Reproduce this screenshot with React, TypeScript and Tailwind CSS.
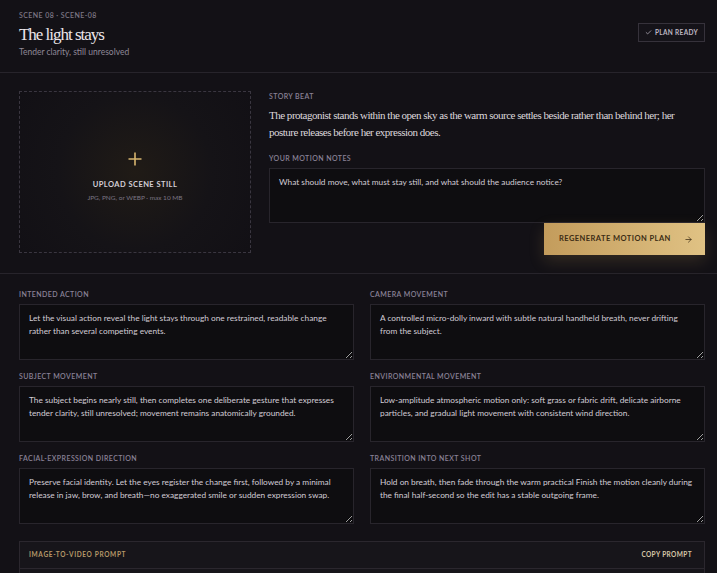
import { ArrowRight, Check } from 'lucide-react';

const sans = { fontFamily: 'Lato, "Open Sans", sans-serif' };
const serif = { fontFamily: '"Liberation Serif", "DejaVu Serif", serif' };

const fields = [
  {
    label: 'Intended action',
    value: 'Let the visual action reveal the light stays through one restrained, readable change rather than several competing events.',
  },
  {
    label: 'Camera movement',
    value: 'A controlled micro-dolly inward with subtle natural handheld breath, never drifting from the subject.',
  },
  {
    label: 'Subject movement',
    value: 'The subject begins nearly still, then completes one deliberate gesture that expresses tender clarity, still unresolved; movement remains anatomically grounded.',
  },
  {
    label: 'Environmental movement',
    value: 'Low-amplitude atmospheric motion only: soft grass or fabric drift, delicate airborne particles, and gradual light movement with consistent wind direction.',
  },
  {
    label: 'Facial-expression direction',
    value: 'Preserve facial identity. Let the eyes register the change first, followed by a minimal release in jaw, brow, and breath\u2014no exaggerated smile or sudden expression swap.',
  },
  {
    label: 'Transition into next shot',
    value: 'Hold on breath, then fade through the warm practical Finish the motion cleanly during the final half-second so the edit has a stable outgoing frame.',
  },
];

function Label({ children }: { children: React.ReactNode }) {
  return (
    <div className="text-[7px] leading-[8px] uppercase tracking-[0.06em] text-[#8a8296] font-semibold">{children}</div>
  );
}

export default function App() {
  return (
    <div className="min-h-screen w-full bg-[#131116] text-[#d9d4dc]" style={sans}>
      {/* header */}
      <header className="flex items-start justify-between h-[73px] border-b border-[#27242b] pl-[19px] pr-[12px] pt-[11px]">
        <div>
          <div className="text-[7px] leading-[8px] uppercase tracking-[0.06em] text-[#7d7785] font-semibold">
            Scene 08 · scene-08
          </div>
          <h1 className="mt-[6px] text-[17px] leading-[20px] tracking-[-0.06em] text-[#ece6ea]" style={serif}>
            The light stays
          </h1>
          <p className="mt-[1px] text-[8.5px] leading-[12px] text-[#8f8897]">Tender clarity, still unresolved</p>
        </div>
        <div className="mt-[12px] flex items-center gap-[3px] h-[19px] px-[6px] border border-[#36323b] bg-[#151319] text-[6.5px] uppercase tracking-[0.05em] text-[#bdb6c2] font-bold">
          <Check size={7} strokeWidth={2.5} />
          Plan ready
        </div>
      </header>

      {/* top */}
      <section className="flex gap-[18px] pl-[19px] pr-[12px] pt-[18px] pb-[18px] border-b border-[#27242b]">
        <div className="w-[232px] h-[162px] shrink-0 pt-[10px] border border-dashed border-[#3a3640] bg-[radial-gradient(circle_at_50%_50%,#201b16_0%,#151317_55%,#121015_100%)] flex flex-col items-center justify-center">
          <svg width="14" height="14" viewBox="0 0 14 14">
            <path d="M7 0.5v13M0.5 7h13" stroke="#d8b56f" strokeWidth="1.6" fill="none" />
          </svg>
          <div className="mt-[14px] text-[7.5px] leading-[10px] font-bold uppercase tracking-[0.06em] text-[#d4cfd6]">
            Upload scene still
          </div>
          <div className="mt-[4px] text-[6.5px] leading-[8px] text-[#7b7583]">JPG, PNG, or WEBP · max 10 MB</div>
        </div>
        <div className="flex-1 min-w-0 pt-[1px]">
          <Label>Story beat</Label>
          <p className="mt-[7px] text-[11px] leading-[17px] tracking-[-0.045em] text-[#ddd7dc]" style={serif}>
            The protagonist stands within the open sky as the warm source settles beside rather than behind her; her
            posture releases before her expression does.
          </p>
          <div className="mt-[13px]">
            <Label>Your motion notes</Label>
          </div>
          <textarea
            className="mt-[6px] block w-full h-[55px] bg-[#0e0d10] border border-[#28252c] px-[9px] py-[7px] text-[8.3px] leading-[13px] text-[#d2ccd5] placeholder:text-[#d2ccd5] outline-none"
            placeholder="What should move, what must stay still, and what should the audience notice?"
            style={sans}
          />
          <div className="flex justify-end">
            <button className="flex items-center justify-between w-[161px] h-[32px] pl-[15px] pr-[12px] bg-[linear-gradient(90deg,#c39c5c,#e0c284)] shadow-[0_6px_16px_rgba(200,160,90,0.18)] text-[7.5px] font-bold uppercase tracking-[0.06em] text-[#3b2b14]">
              Regenerate motion plan
              <ArrowRight size={9} strokeWidth={2} />
            </button>
          </div>
        </div>
      </section>

      {/* grid */}
      <section className="pl-[19px] pr-[12px] pt-[16px]">
        <div className="grid grid-cols-2 gap-x-[16px] gap-y-[12px]">
          {fields.map((f) => (
            <div key={f.label}>
              <Label>{f.label}</Label>
              <textarea
                className="mt-[6px] block w-full h-[56px] bg-[#0e0d10] border border-[#28252c] px-[9px] pt-[7px] text-[8.3px] leading-[13px] text-[#d2ccd5] outline-none resize-y"
                defaultValue={f.value}
                style={sans}
              />
            </div>
          ))}
        </div>

        <div className="mt-[17px] border border-[#2b272e] bg-[#17151a]">
          <div className="flex items-center justify-between h-[27px] px-[9px] border-b border-[#2b272e]">
            <span className="text-[6.5px] uppercase tracking-[0.1em] text-[#b69868] font-bold">Image-to-video prompt</span>
            <span className="text-[6.5px] uppercase tracking-[0.06em] text-[#d8c8a8] font-bold pr-[3px]">Copy prompt</span>
          </div>
          <div className="h-[40px]" />
        </div>
      </section>
    </div>
  );
}
